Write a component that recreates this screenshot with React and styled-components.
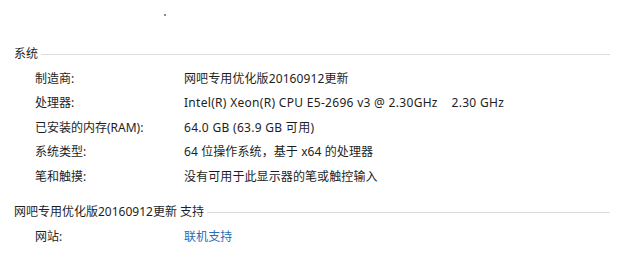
import React from 'react'
import styled, { createGlobalStyle } from 'styled-components';

const Global = createGlobalStyle`
  body {
    margin: 0;
    background: #ffffff;
    font-family: "Noto Sans", "Noto Sans CJK SC", sans-serif;
    font-size: 12px;
    color: #1e1e1e;
  }
`;

const Page = styled.div`
  width: 625px;
  height: 256px;
  padding: 0 15px 0 14px;
  box-sizing: border-box;
  overflow: hidden;
`;

const Dot = styled.div`
  width: 2px;
  height: 2px;
  margin: 14px 0 0 150px;
  background: #8a8a8a;
`;

const Group = styled.div`
  margin-top: ${p => p.$gap}px;
`;

const Header = styled.div`
  display: flex;
  align-items: center;
  height: 24.5px;
  gap: 3px;
`;

const Title = styled.span`
  white-space: nowrap;
`;

const Rule = styled.div`
  flex: 1;
  height: 1px;
  margin-top: 3px;
  background: #dcdcdc;
`;

const Row = styled.div`
  display: grid;
  grid-template-columns: 149px 1fr;
  height: 24.5px;
  align-items: center;
  padding-left: 21px;
  white-space: pre;
`;

const Value = styled.span`
  color: ${p => (p.$link ? '#2b6cb3' : '#1e1e1e')};
  letter-spacing: ${p => (p.$latin ? '0.3px' : '0.1px')};
`;

const system = [
  ['制造商:', '网吧专用优化版20160912更新'],
  ['处理器:', 'Intel(R) Xeon(R) CPU E5-2696 v3 @ 2.30GHz    2.30 GHz', true],
  ['已安装的内存(RAM):', '64.0 GB (63.9 GB 可用)', true],
  ['系统类型:', '64 位操作系统，基于 x64 的处理器'],
  ['笔和触摸:', '没有可用于此显示器的笔或触控输入'],
];

const App = () => {
  return (
    <Page>
      <Global />
      <Dot />
      <Group $gap={25}>
        <Header>
          <Title>系统</Title>
          <Rule />
        </Header>
        {system.map(([k, v, latin]) => (
          <Row key={k}>
            <span>{k}</span>
            <Value $latin={latin}>{v}</Value>
          </Row>
        ))}
      </Group>
      <Group $gap={11}>
        <Header>
          <Title>网吧专用优化版20160912更新 支持</Title>
          <Rule />
        </Header>
        <Row>
          <span>网站:</span>
          <Value $link>联机支持</Value>
        </Row>
      </Group>
    </Page>
  )
}

export default App
